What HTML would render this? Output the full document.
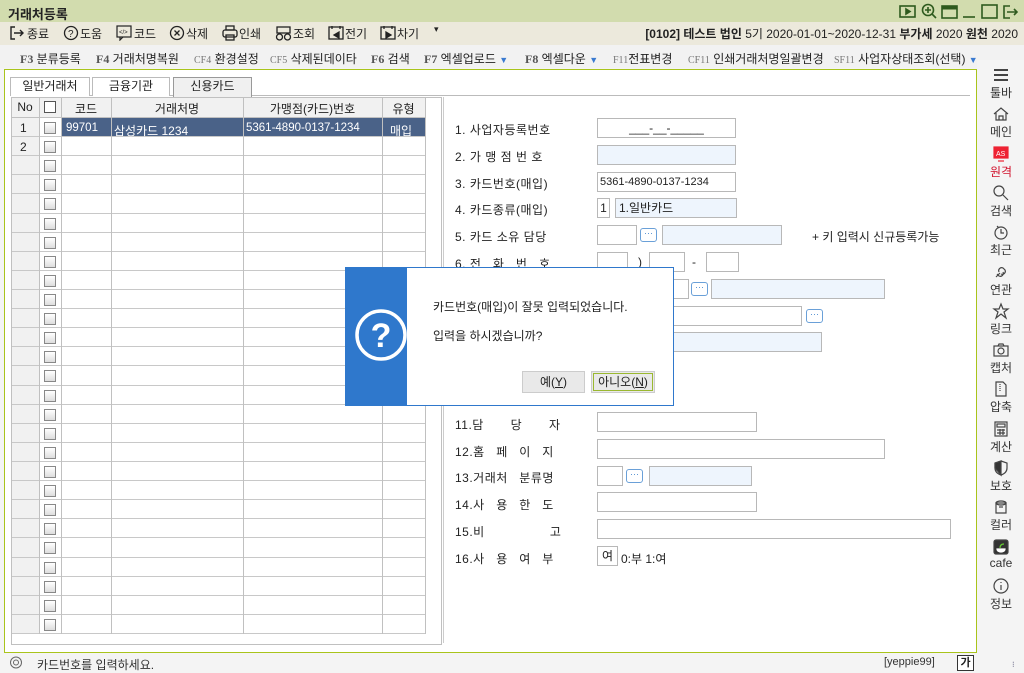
<!DOCTYPE html>
<html><head><meta charset="utf-8">
<style>
*{margin:0;padding:0;box-sizing:border-box}
body{width:1024px;height:672px;overflow:hidden;background:#f4f4f4;font-family:"Liberation Sans","Noto Sans CJK KR","NanumGothic",sans-serif;font-size:12px;color:#222;position:relative}
.a{position:absolute}
#title{left:0;top:0;width:1024px;height:22px;background:#d2dcae}
#tb{left:0;top:22px;width:1024px;height:23px;background:#ece9dc}
#fk{left:0;top:45px;width:1024px;height:23px;background:#f2f2f2}
.fk{top:50px;font-size:12px;color:#222}
.fk b{font-family:"Liberation Serif",serif;color:#555;font-weight:bold;font-size:12px}
.fk s{text-decoration:none;font-family:"Liberation Serif",serif;color:#777;font-size:10px}
#main{left:4px;top:69px;width:973px;height:584px;border:1px solid #a9c41c;background:#fff}
.tab{top:77px;height:19px;border:1px solid #bbb;border-bottom:none;background:#fff;text-align:center;font-size:12px;line-height:17px}
.box{height:20px;border:1px solid #b8b8b8;background:#fff}
.bl{background:#eef5fd}
.lb{font-size:12px;letter-spacing:0.5px}
.ic{width:17px;height:14px;border:1.5px solid #6aa0d8;border-radius:3px;background:#fff;font-size:9px;color:#4a8ad0;text-align:center;line-height:8px}
.sb{left:978px;width:46px;text-align:center;font-size:12px;color:#333}
#grid{left:11px;top:97px;width:431px;height:548px;border:1px solid #c0c0c0;background:#fff}
</style></head><body>
<div class="a" id="title"></div>
<div class="a" style="left:8px;top:4px;font-weight:bold;font-size:13px">거래처등록</div>
<svg class="a" style="left:898px;top:3px" width="124" height="17" viewBox="0 0 124 17" fill="none" stroke="#2e5a1e" stroke-width="1.6">
<rect x="2" y="3" width="15" height="11"/><path d="M8 6l4 2.5-4 2.5z" fill="#2e5a1e"/>
<circle cx="30" cy="7" r="5.5"/><path d="M27 7h6M30 4v6M34 11l4 4"/>
<rect x="44" y="3" width="15" height="12"/><path d="M44 5h15" stroke-width="3"/>
<path d="M65 14h12"/>
<rect x="84" y="2" width="15" height="13"/>
<path d="M112 3h-6v12h6M109 9h10M116 6l3 3-3 3"/>
</svg>
<div class="a" id="tb"></div>
<div class="a" style="left:0;top:23px;width:450px;height:20px">
<svg class="a" style="left:10px;top:3px" width="16" height="14" fill="none" stroke="#222" stroke-width="1.4"><path d="M5 1H1v12h4M4 7h9M10 4l3 3-3 3"/></svg>
<span class="a" style="left:27px;top:2px">종료</span>
<svg class="a" style="left:63px;top:2px" width="16" height="16" fill="none" stroke="#222" stroke-width="1.3"><circle cx="8" cy="8" r="6.5"/><text x="5" y="12" font-size="10" fill="#222" stroke="none" font-family="Liberation Sans">?</text></svg>
<span class="a" style="left:80px;top:2px">도움</span>
<svg class="a" style="left:116px;top:2px" width="16" height="16" fill="none" stroke="#222" stroke-width="1.2"><rect x="1" y="1" width="14" height="11"/><path d="M4 12v3l3-3"/><text x="3" y="9" font-size="6" fill="#222" stroke="none">&lt;/&gt;</text></svg>
<span class="a" style="left:134px;top:2px">코드</span>
<svg class="a" style="left:169px;top:2px" width="16" height="16" fill="none" stroke="#222" stroke-width="1.3"><circle cx="8" cy="8" r="6.5"/><path d="M5.5 5.5l5 5M10.5 5.5l-5 5"/></svg>
<span class="a" style="left:186px;top:2px">삭제</span>
<svg class="a" style="left:222px;top:2px" width="16" height="16" fill="none" stroke="#222" stroke-width="1.3"><rect x="4" y="1" width="8" height="4"/><rect x="1" y="5" width="14" height="7" rx="2"/><rect x="4" y="10" width="8" height="5"/></svg>
<span class="a" style="left:239px;top:2px">인쇄</span>
<svg class="a" style="left:275px;top:2px" width="18" height="16" fill="none" stroke="#222" stroke-width="1.3"><rect x="2" y="2" width="13" height="6"/><circle cx="4.5" cy="12" r="3"/><circle cx="12.5" cy="12" r="3"/></svg>
<span class="a" style="left:293px;top:2px">조회</span>
<svg class="a" style="left:328px;top:2px" width="16" height="16" fill="none" stroke="#222" stroke-width="1.3"><rect x="1" y="2" width="14" height="12"/><path d="M4 1v3M12 1v3"/><path d="M11 7l-5 3 5 3z" fill="#222"/></svg>
<span class="a" style="left:345px;top:2px">전기</span>
<svg class="a" style="left:380px;top:2px" width="16" height="16" fill="none" stroke="#222" stroke-width="1.3"><rect x="1" y="2" width="14" height="12"/><path d="M4 1v3M12 1v3"/><path d="M6 7l5 3-5 3z" fill="#222"/></svg>
<span class="a" style="left:397px;top:2px">차기</span>
<span class="a" style="left:434px;top:1px;font-size:9px">▾</span>
</div>
<div class="a" style="right:6px;top:25px;font-size:12px;white-space:nowrap"><b>[0102] 테스트 법인</b> 5기 2020-01-01~2020-12-31 <b>부가세</b> 2020 <b>원천</b> 2020</div>
<div class="a" id="fk"></div>
<div class="a fk" style="left:20px"><b>F3</b> 분류등록</div>
<div class="a fk" style="left:96px"><b>F4</b> 거래처명복원</div>
<div class="a fk" style="left:194px"><s>CF4</s> 환경설정</div>
<div class="a fk" style="left:270px"><s>CF5</s> 삭제된데이타</div>
<div class="a fk" style="left:371px"><b>F6</b> 검색</div>
<div class="a fk" style="left:424px"><b>F7</b> 엑셀업로드 <span style="color:#3a7ad0;font-size:9px">▼</span></div>
<div class="a fk" style="left:525px"><b>F8</b> 엑셀다운 <span style="color:#3a7ad0;font-size:9px">▼</span></div>
<div class="a fk" style="left:613px"><s>F11</s>전표변경</div>
<div class="a fk" style="left:688px"><s>CF11</s> 인쇄거래처명일괄변경</div>
<div class="a fk" style="left:834px"><s>SF11</s> 사업자상태조회(선택) <span style="color:#3a7ad0;font-size:9px">▼</span></div>

<div class="a" id="main"></div>
<div class="a" style="left:10px;top:95px;width:960px;height:1px;background:#bbb"></div>
<div class="a tab" style="left:10px;width:80px">일반거래처</div>
<div class="a tab" style="left:92px;width:78px">금융기관</div>
<div class="a tab" style="left:173px;width:79px;background:#f0f0f0;height:20px;border-color:#999">신용카드</div>

<div class="a" id="grid"></div>
<div id="g"></div>

<!-- form -->
<div class="a" style="left:443px;top:97px;width:1px;height:546px;background:#ccc"></div>
<div class="a lb" style="left:455px;top:121px">1. 사업자등록번호</div>
<div class="a box" style="left:597px;top:118px;width:139px;text-align:center;line-height:18px">___-__-_____</div>
<div class="a lb" style="left:455px;top:148px">2. 가 맹 점 번 호</div>
<div class="a box bl" style="left:597px;top:145px;width:139px"></div>
<div class="a lb" style="left:455px;top:175px">3. 카드번호(매입)</div>
<div class="a box" style="left:597px;top:172px;width:139px;padding-left:2px;line-height:18px;font-size:11px">5361-4890-0137-1234</div>
<div class="a lb" style="left:455px;top:201px">4. 카드종류(매입)</div>
<div class="a box" style="left:597px;top:198px;width:13px;text-align:center;line-height:18px">1</div>
<div class="a box bl" style="left:615px;top:198px;width:122px;padding-left:3px;line-height:18px">1.일반카드</div>
<div class="a lb" style="left:455px;top:228px">5. 카드 소유 담당</div>
<div class="a box" style="left:597px;top:225px;width:40px"></div>
<div class="a ic" style="left:640px;top:228px">···</div>
<div class="a box bl" style="left:662px;top:225px;width:120px"></div>
<div class="a" style="left:812px;top:228px">+ 키 입력시 신규등록가능</div>
<div class="a lb" style="left:455px;top:255px">6. 전&nbsp;&nbsp; 화&nbsp;&nbsp; 번&nbsp;&nbsp; 호</div>
<div class="a box" style="left:597px;top:252px;width:31px"></div>
<div class="a" style="left:638px;top:255px">)</div>
<div class="a box" style="left:649px;top:252px;width:36px"></div>
<div class="a" style="left:692px;top:255px">-</div>
<div class="a box" style="left:706px;top:252px;width:33px"></div>
<div class="a box" style="left:650px;top:279px;width:39px"></div>
<div class="a ic" style="left:691px;top:282px">···</div>
<div class="a box bl" style="left:711px;top:279px;width:174px"></div>
<div class="a box" style="left:597px;top:306px;width:205px"></div>
<div class="a ic" style="left:806px;top:309px">···</div>
<div class="a box bl" style="left:650px;top:332px;width:172px"></div>
<div class="a box bl" style="left:597px;top:385px;width:37px"></div>
<div class="a lb" style="left:455px;top:416px">11.담&nbsp;&nbsp;&nbsp;&nbsp;&nbsp;&nbsp; 당&nbsp;&nbsp;&nbsp;&nbsp;&nbsp;&nbsp; 자</div>
<div class="a box" style="left:597px;top:412px;width:160px"></div>
<div class="a lb" style="left:455px;top:443px">12.홈&nbsp;&nbsp; 페&nbsp;&nbsp; 이&nbsp;&nbsp; 지</div>
<div class="a box" style="left:597px;top:439px;width:288px"></div>
<div class="a lb" style="left:455px;top:469px">13.거래처&nbsp;&nbsp; 분류명</div>
<div class="a box" style="left:597px;top:466px;width:26px"></div>
<div class="a ic" style="left:626px;top:469px">···</div>
<div class="a box bl" style="left:649px;top:466px;width:103px"></div>
<div class="a lb" style="left:455px;top:496px">14.사&nbsp;&nbsp; 용&nbsp;&nbsp; 한&nbsp;&nbsp; 도</div>
<div class="a box" style="left:597px;top:492px;width:160px"></div>
<div class="a lb" style="left:455px;top:523px">15.비&nbsp;&nbsp;&nbsp;&nbsp;&nbsp;&nbsp;&nbsp;&nbsp;&nbsp;&nbsp;&nbsp;&nbsp;&nbsp;&nbsp;&nbsp;&nbsp; 고</div>
<div class="a box" style="left:597px;top:519px;width:354px"></div>
<div class="a lb" style="left:455px;top:550px">16.사&nbsp;&nbsp; 용&nbsp;&nbsp; 여&nbsp;&nbsp; 부</div>
<div class="a box" style="left:597px;top:546px;width:21px;text-align:center;line-height:18px">여</div>
<div class="a" style="left:621px;top:550px">0:부 1:여</div>

<!-- dialog -->
<div class="a" style="left:345px;top:267px;width:329px;height:139px;background:#fff;border:1px solid #2f78cc"></div>
<div class="a" style="left:345px;top:267px;width:62px;height:139px;background:#2f78cc"></div>
<svg class="a" style="left:345px;top:267px" width="62" height="139"><circle cx="36" cy="68" r="24" fill="none" stroke="#fff" stroke-width="3.5"/><text x="36" y="80" text-anchor="middle" font-size="34" font-weight="bold" fill="#fff" font-family="Liberation Sans">?</text></svg>
<div class="a" style="left:433px;top:298px">카드번호(매입)이 잘못 입력되었습니다.</div>
<div class="a" style="left:433px;top:327px">입력을 하시겠습니까?</div>
<div class="a" style="left:522px;top:371px;width:63px;height:22px;border:1px solid #ccc;background:#e9e9e9;text-align:center;line-height:20px">예(<u>Y</u>)</div>
<div class="a" style="left:591px;top:371px;width:64px;height:22px;border:1px solid #ccc;background:#e9e9e9;padding:1px"><div style="border:1px solid #9ab830;height:18px;text-align:center;line-height:16px">아니오(<u>N</u>)</div></div>

<!-- sidebar -->
<div class="a" style="left:977px;top:60px;width:47px;height:592px;background:#f4f4f4"></div>
<div id="sb"></div>

<!-- status -->
<div class="a" style="left:0;top:653px;width:1024px;height:19px;background:#f4f4f4"></div>
<svg class="a" style="left:9px;top:656px" width="14" height="13" fill="none" stroke="#666"><circle cx="7" cy="6.5" r="5.5"/><circle cx="7" cy="6.5" r="2.5"/></svg>
<div class="a" style="left:37px;top:656px;font-size:12px;color:#333">카드번호를 입력하세요.</div>
<div class="a" style="left:884px;top:656px;font-size:11px;color:#333">[yeppie99]</div>
<div class="a" style="left:957px;top:655px;width:17px;height:16px;border:1px solid #333;background:#fff;font-weight:bold;font-size:11px;text-align:center;line-height:14px">가</div>
<div class="a" style="left:1012px;top:660px;font-size:8px;color:#557">⁝</div>

<script>
var g='';var cols=[11,39,61,111,243,382,425];
g+='<div class="a" style="left:12px;top:98px;width:413px;height:20px;background:#f1f1f1;border-bottom:1px solid #c0c0c0"></div>';
var hd=['No','','코드','거래처명','가맹점(카드)번호','유형'];
for(var i=0;i<6;i++){g+='<div class="a" style="left:'+cols[i]+'px;top:100px;width:'+(cols[i+1]-cols[i])+'px;text-align:center">'+hd[i]+'</div>';}
g+='<div class="a" style="left:44px;top:101px;width:12px;height:12px;border:1px solid #555;background:#fff"></div>';
var rh=19.11,top0=118;
for(var r=0;r<27;r++){var y=top0+r*rh;
 if(r==0){g+='<div class="a" style="left:61px;top:'+y+'px;width:364px;height:'+rh+'px;background:#4a6288"></div>';}
 g+='<div class="a" style="left:12px;top:'+y+'px;width:27px;height:'+rh+'px;background:#f1f1f1"></div>';
 g+='<div class="a" style="left:12px;top:'+(y+rh-1)+'px;width:413px;height:1px;background:#c8c8c8"></div>';
 g+='<div class="a" style="left:44px;top:'+(y+4)+'px;width:12px;height:12px;border:1px solid #888;background:linear-gradient(#fff,#ddd)"></div>';
 if(r<2)g+='<div class="a" style="left:20px;top:'+(y+3)+'px">'+(r+1)+'</div>';
}
g+='<div class="a" style="left:66px;top:122px;color:#fff;font-size:11.5px">99701</div><div class="a" style="left:114px;top:122px;color:#fff">삼성카드 1234</div><div class="a" style="left:246px;top:122px;color:#fff;font-size:11.5px">5361-4890-0137-1234</div><div class="a" style="left:390px;top:122px;color:#fff">매입</div>';
for(var i=1;i<7;i++){g+='<div class="a" style="left:'+cols[i]+'px;top:98px;width:1px;height:'+(top0+27*rh-98)+'px;background:#c0c0c0"></div>';}
document.getElementById('g').innerHTML=g;
var items=['툴바','메인','원격','검색','최근','연관','링크','캡처','압축','계산','보호','컬러','cafe','정보'];
var ic=[
'<path d="M2 4h14M2 9h14M2 14h14" stroke-width="2"/>',
'<path d="M2 9l7-6 7 6M4 8v7h10V8M7 15v-4h4v4"/>',
'<rect x="2" y="2" width="14" height="11" fill="#e23" stroke="#e23"/><text x="4" y="11" font-size="7" fill="#fff" stroke="none" font-family="Liberation Sans">AS</text><path d="M6 16h6" stroke="#e23"/>',
'<circle cx="7" cy="7" r="5"/><path d="M11 11l5 5"/>',
'<circle cx="9" cy="10" r="6"/><path d="M9 6v4h3M5 3l2 2"/>',
'<path d="M4 14l4-4M7 9a3 3 0 0 1 4-4l2 2a3 3 0 0 1-4 4M11 9a3 3 0 0 1-4 4l-2-2"/>',
'<path d="M9 2l2 5h5l-4 3 2 6-5-4-5 4 2-6-4-3h5z"/>',
'<rect x="2" y="5" width="14" height="10"/><circle cx="9" cy="10" r="3"/><path d="M6 5l1-2h4l1 2"/>',
'<path d="M4 2h7l3 3v11H4z"/><path d="M8 4v8" stroke-dasharray="1 1"/>',
'<rect x="3" y="2" width="12" height="14"/><rect x="5" y="4" width="8" height="3"/><path d="M5 10h8M5 13h8M8 9v6M11 9v6"/>',
'<path d="M9 2l6 2v5c0 4-3 6-6 7-3-1-6-3-6-7V4z"/><path d="M9 2v14l-6-7V4z" fill="#333"/>',
'<path d="M4 5h10v10H4z"/><ellipse cx="9" cy="5" rx="5" ry="2"/><path d="M7 9h4"/>',
'<rect x="2" y="2" width="14" height="14" rx="2" fill="#333"/><path d="M5 11h8c0 2-2 3-4 3s-4-1-4-3z" fill="#fff" stroke="#fff"/><path d="M8 10c0-3 2-4 4-4" stroke="#6c3"/>',
'<circle cx="9" cy="9" r="7"/><path d="M9 8v5M9 5v1"/>'];
var s='';
for(var i=0;i<items.length;i++){var y=66+i*39.3;var c=i==2?'#d0102a':'#333';
 s+='<svg class="a" style="left:992px;top:'+y+'px" width="18" height="18" fill="none" stroke="#444" stroke-width="1.2">'+ic[i]+'</svg>';
 s+='<div class="a sb" style="top:'+(y+18)+'px;color:'+c+'">'+items[i]+'</div>';}
document.getElementById('sb').innerHTML=s;
</script>
</body></html>
